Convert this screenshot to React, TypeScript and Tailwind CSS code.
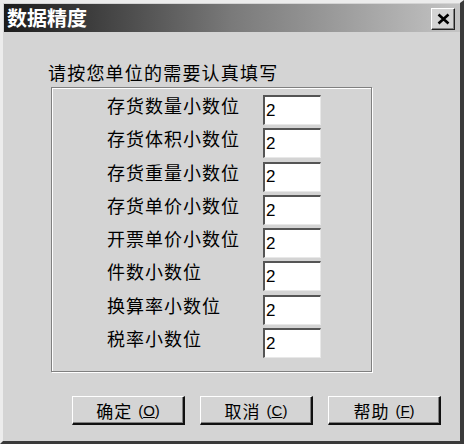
import React from 'react';

const rows = [
  '存货数量小数位',
  '存货体积小数位',
  '存货重量小数位',
  '存货单价小数位',
  '开票单价小数位',
  '件数小数位',
  '换算率小数位',
  '税率小数位',
];

const cjk = "font-['Noto_Sans_CJK_SC',sans-serif]";

function Btn({ label, hot }: { label: string; hot: string }) {
  return (
    <button
      className={`w-[113px] h-[29px] flex items-center justify-center bg-[#d4d4d4] border-t border-l border-white border-b-2 border-r-2 border-b-[#111] border-r-[#111] shadow-[inset_-1px_-1px_0_#808080] text-[17px] leading-none text-black ${cjk}`}
    >
      <span className="tracking-[1px]">{label}</span>
      <span className="ml-[6px] font-['Liberation_Sans',sans-serif] text-[15px]">
        (<span className="underline">{hot}</span>)
      </span>
    </button>
  );
}

export default function App() {
  return (
    <div className="w-[464px] h-[444px] bg-[#d4d4d4] border-t-[3px] border-l-[3px] border-t-[#ececec] border-l-[#ececec] border-r-[4px] border-b-[3px] border-r-[#3a3a3a] border-b-[#3a3a3a] flex flex-col">
      <div className="mt-px ml-px h-[28px] flex items-center justify-between bg-gradient-to-r from-[#1c1c1c] via-[#7a7a7a] to-[#c4c4c4]">
        <span className={`ml-[3px] text-white font-bold text-[20px] leading-none ${cjk}`}>数据精度</span>
        <div className="mr-[5px] mt-[2px] w-[24px] h-[22px] flex items-center justify-center bg-[#d4d4d4] border-t border-l border-white border-b border-r border-b-[#222] border-r-[#222] shadow-[inset_-1px_-1px_0_#808080]">
          <svg width="13" height="12" viewBox="0 0 13 12">
            <path d="M1.5 1.5 L11.5 10.5 M11.5 1.5 L1.5 10.5" stroke="#000" strokeWidth="2.6" />
          </svg>
        </div>
      </div>

      <div className={`ml-[45px] mt-[30px] text-[18px] leading-[20px] tracking-[1.2px] text-black ${cjk}`}>
        请按您单位的需要认真填写
      </div>

      <div className="ml-[48px] mt-[5px] w-[321px] h-[285px] border border-[#808080] shadow-[inset_1px_1px_0_#fff,1px_1px_0_#fff] pt-[7px]">
        <div className="flex flex-col gap-[3.3px]">
          {rows.map((r) => (
            <div key={r} className="flex h-[30px]">
              <div className={`ml-[55px] w-[156px] text-[18px] leading-[20px] tracking-[1px] text-black ${cjk}`}>
                {r}
              </div>
              <div className="w-[58px] h-[30px] bg-white border-t-2 border-l-2 border-t-[#555] border-l-[#555] border-b border-r border-b-[#e8e8e8] border-r-[#e8e8e8] flex items-center pl-[1px] font-['Liberation_Sans',sans-serif] text-[17px] text-black">
                2
              </div>
            </div>
          ))}
        </div>
      </div>

      <div className="mt-[24px] ml-[69px] flex gap-[15px]">
        <Btn label="确定" hot="O" />
        <Btn label="取消" hot="C" />
        <Btn label="帮助" hot="F" />
      </div>
    </div>
  );
}
